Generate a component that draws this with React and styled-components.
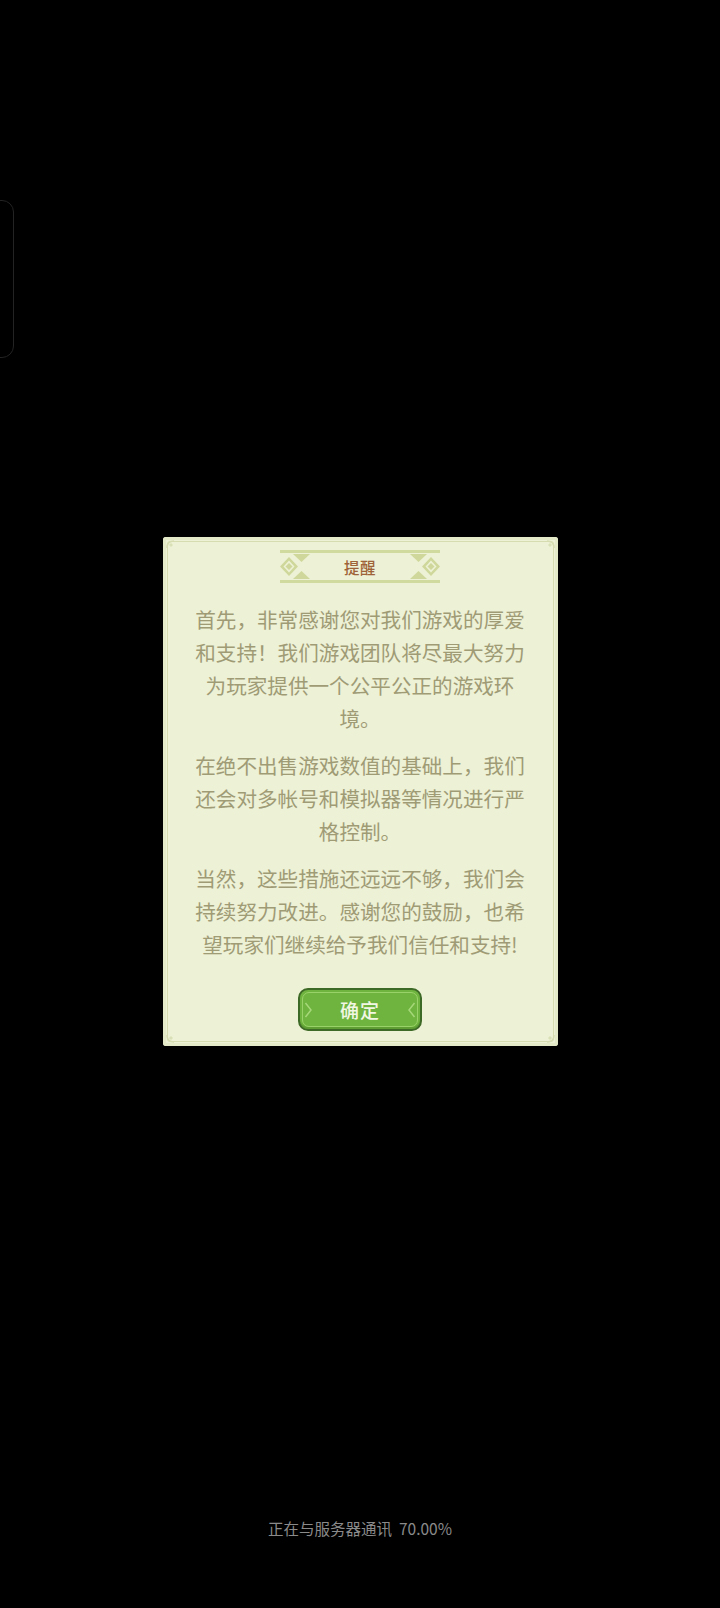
import React from "react";
import styled, { createGlobalStyle } from "styled-components";

const Global = createGlobalStyle`
  html, body { margin: 0; padding: 0; background: #000; }
  body { font-family: "Noto Sans CJK SC", "Noto Sans", sans-serif; }
`;

const Page = styled.div`
  position: relative;
  width: 720px;
  height: 1608px;
  background: #000;
  display: flex;
  flex-direction: column;
  align-items: center;
  overflow: hidden;
`;

const SideHandle = styled.div`
  position: absolute;
  left: -14px;
  top: 200px;
  width: 26px;
  height: 156px;
  border: 1.5px solid #232323;
  border-radius: 12px;
`;

const Dialog = styled.div`
  position: relative;
  margin-top: 537px;
  width: 395px;
  height: 509px;
  box-sizing: border-box;
  background: #edf1d5;
  border-radius: 3px;
  box-shadow: inset 0 0 0 3px #e4e9c8;
  padding: 13px 32px 0;
  display: flex;
  flex-direction: column;
  align-items: center;
  &::before {
    content: "";
    position: absolute;
    inset: 4px;
    border: 1.5px solid #d6dcb0;
    border-radius: 3px;
    pointer-events: none;
  }
`;

const Corner = styled.svg`
  position: absolute;
  width: 14px;
  height: 14px;
  ${(p) => (p.$top ? "top: 2px;" : "bottom: 2px;")}
  ${(p) => (p.$left ? "left: 2px;" : "right: 2px;")}
  transform: scale(${(p) => (p.$left ? 1 : -1)}, ${(p) => (p.$top ? 1 : -1)});
`;

const TitleBar = styled.div`
  width: 160px;
  height: 33px;
  box-sizing: border-box;
  border-top: 3px solid #d0d99e;
  border-bottom: 3px solid #d0d99e;
  display: flex;
  align-items: center;
  justify-content: space-between;
`;

const TitleText = styled.span`
  font-size: 15.5px;
  font-weight: 500;
  line-height: 20px;
  color: #9e6338;
  letter-spacing: 0.5px;
`;

const Ornament = styled.svg`
  width: 32px;
  height: 27px;
  transform: scaleX(${(p) => (p.$flip ? -1 : 1)});
`;

const Body = styled.div`
  margin-top: 20px;
  width: 334px;
  display: flex;
  flex-direction: column;
  gap: 14px;
`;

const Para = styled.p`
  margin: 0;
  font-size: 20.6px;
  line-height: 33px;
  color: #9f9b75;
  text-align: center;
  word-break: break-all;
`;

const Button = styled.button`
  margin-top: 27px;
  position: relative;
  width: 124px;
  height: 43px;
  box-sizing: border-box;
  border: 2px solid #3e6a27;
  border-radius: 10px;
  background: #6fb43e;
  color: #f2f7e4;
  font-family: "Noto Sans CJK SC", sans-serif;
  font-size: 19px;
  font-weight: 500;
  letter-spacing: 1px;
  padding: 0;
  display: flex;
  align-items: center;
  justify-content: center;
  box-shadow: inset 0 -2px 0 #5e9e33;
  &::before {
    content: "";
    position: absolute;
    inset: 2px;
    border: 1.5px solid #9ad26a;
    border-radius: 7px;
    pointer-events: none;
  }
`;

const Chevron = styled.svg`
  position: absolute;
  top: 50%;
  margin-top: -9px;
  width: 9px;
  height: 18px;
  ${(p) => (p.$left ? "left: 4px;" : "right: 4px; transform: scaleX(-1);")}
`;

const Status = styled.div`
  margin-top: auto;
  margin-bottom: 69px;
  font-size: 15.5px;
  line-height: 22px;
  color: #8a8a8a;
  white-space: pre;
`;

function OrnamentSvg({ flip }) {
  return (
    <Ornament $flip={flip} viewBox="0 0 32 27">
      <polygon points="9,4 18,13.5 9,23 0,13.5" fill="#cfd89a" />
      <polygon points="9,7.5 14.5,13.5 9,19.5 3.5,13.5" fill="#edf1d5" />
      <polygon points="9,10 12.5,13.5 9,17 5.5,13.5" fill="#cfd89a" />
      <polygon points="13,1 30,1 21.5,9" fill="#cfd89a" />
      <polygon points="13,26 30,26 21.5,18" fill="#cfd89a" />
    </Ornament>
  );
}

function CornerSvg(props) {
  return (
    <Corner viewBox="0 0 14 14" {...props}>
      <path d="M2 9 Q2 2 9 2" stroke="#d6dcb0" strokeWidth="1.5" fill="none" />
      <path d="M4 6 L6 4 L8 6 L6 8 Z" fill="#d9dfb6" />
    </Corner>
  );
}

export default function App() {
  return (
    <Page>
      <Global />
      <SideHandle />
      <Dialog>
        <CornerSvg $top $left />
        <CornerSvg $top />
        <CornerSvg $left />
        <CornerSvg />
        <TitleBar>
          <OrnamentSvg />
          <TitleText>提醒</TitleText>
          <OrnamentSvg flip />
        </TitleBar>
        <Body>
          <Para>首先，非常感谢您对我们游戏的厚爱和支持！我们游戏团队将尽最大努力为玩家提供一个公平公正的游戏环境。</Para>
          <Para>在绝不出售游戏数值的基础上，我们还会对多帐号和模拟器等情况进行严格控制。</Para>
          <Para>当然，这些措施还远远不够，我们会持续努力改进。感谢您的鼓励，也希望玩家们继续给予我们信任和支持!</Para>
        </Body>
        <Button>
          <Chevron $left viewBox="0 0 9 18">
            <path d="M1.5 2 L7 9 L1.5 16" stroke="#a6d87a" strokeWidth="1.5" fill="none" />
          </Chevron>
          确定
          <Chevron viewBox="0 0 9 18">
            <path d="M1.5 2 L7 9 L1.5 16" stroke="#a6d87a" strokeWidth="1.5" fill="none" />
          </Chevron>
        </Button>
      </Dialog>
      <Status>{"正在与服务器通讯  70.00%"}</Status>
    </Page>
  );
}
